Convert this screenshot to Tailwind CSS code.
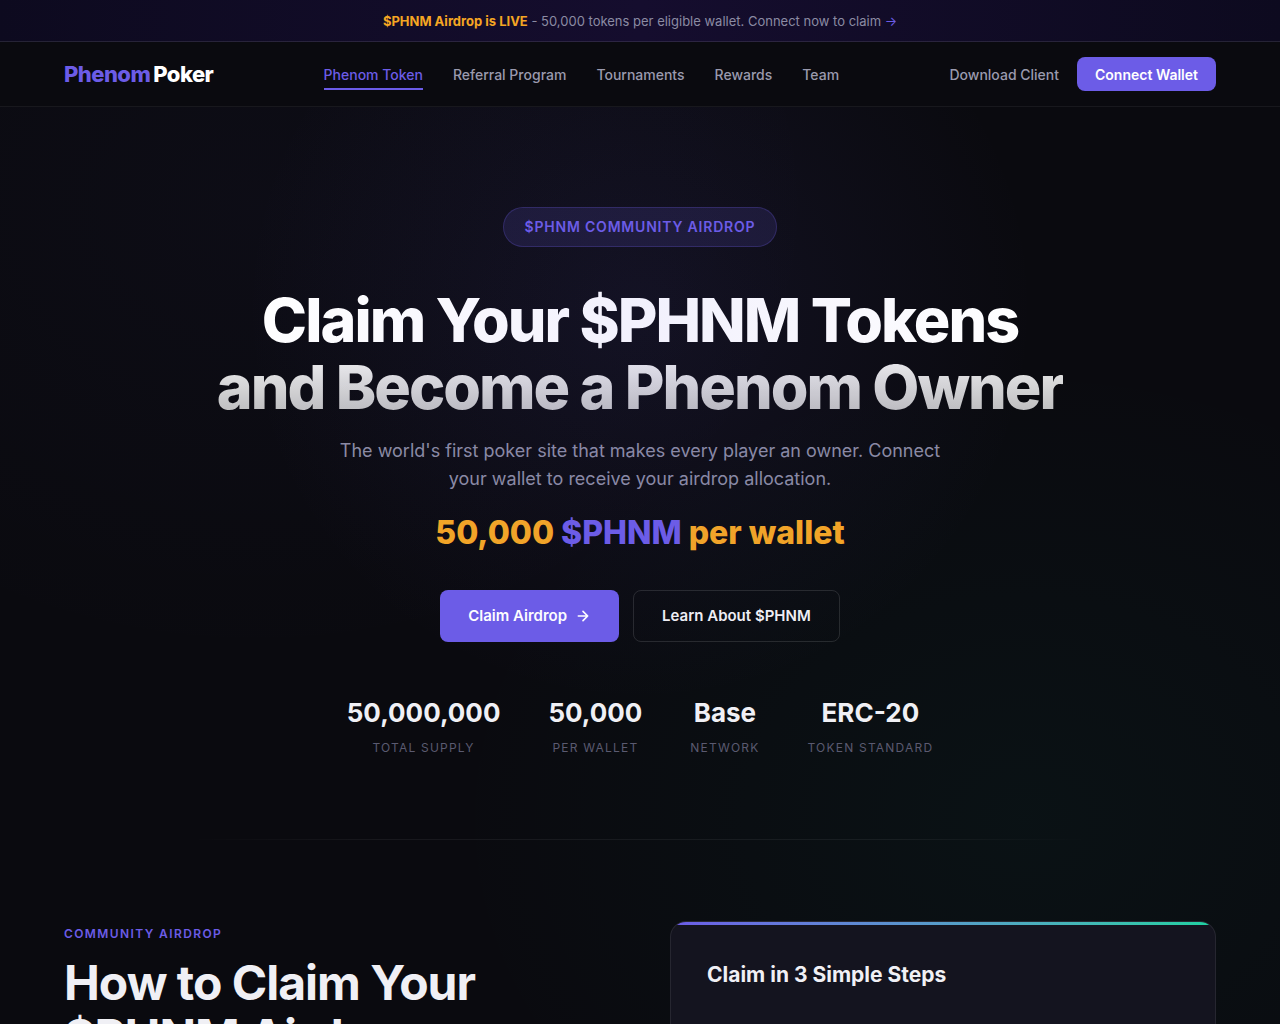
<!DOCTYPE html>
<html lang="en">
<head>
<meta charset="UTF-8">
<meta name="viewport" content="width=device-width, initial-scale=1.0">
<title>Phenom Poker - $PHNM Airdrop</title>
<script src="https://cdn.jsdelivr.net/npm/@tailwindcss/browser@4"></script>
</head>
<body class="min-h-screen bg-[#0a0a0f] bg-[radial-gradient(ellipse_at_20%_20%,rgba(108,92,231,0.03)_0%,transparent_40%),radial-gradient(ellipse_at_80%_80%,rgba(0,206,160,0.04)_0%,transparent_40%)] bg-fixed font-['Inter',sans-serif] text-[#f0f0f5]">

<!-- Announcement -->
<div class="border-b border-white/10 bg-linear-to-r from-[#0d0a1f] via-[#150d2e] to-[#0d0a1f] px-4 pt-3 pb-[10px] text-center text-[13px] leading-[19px] text-[#8b8ba3]">
    <strong class="font-bold text-[#f5a623]">$PHNM Airdrop is LIVE</strong> - 50,000 tokens per eligible wallet. Connect now to claim <a href="#claim" class="text-[#6c5ce7]">→</a>
</div>

<!-- Navbar -->
<nav class="border-b border-white/6 bg-[#0a0a0f]">
    <div class="mx-auto flex h-16 max-w-7xl items-center justify-between px-16">
        <a href="#" class="flex gap-[3px] text-[22px] font-extrabold tracking-tight"><span class="text-[#6c5ce7]">Phenom</span><span class="text-white">Poker</span></a>
        <div class="flex gap-[30px] text-[14px] font-medium leading-[22px] text-[#9a9aae]">
            <a href="#token" class="border-b-2 border-[#6c5ce7] pt-1.5 pb-0.5 text-[#6c5ce7]">Phenom Token</a>
            <a href="#referral" class="pt-1.5 pb-0.5">Referral Program</a>
            <a href="#tournaments" class="pt-1.5 pb-0.5">Tournaments</a>
            <a href="#rewards" class="pt-1.5 pb-0.5">Rewards</a>
            <a href="#team" class="pt-1.5 pb-0.5">Team</a>
        </div>
        <div class="flex items-center gap-[18px]">
            <a href="#download" class="text-[14px] font-medium text-[#9a9aae]">Download Client</a>
            <button type="button" class="h-[34px] rounded-lg bg-[#6c5ce7] px-[18px] text-[14px] font-semibold text-white">Connect Wallet</button>
        </div>
    </div>
</nav>

<!-- Hero -->
<header class="relative overflow-hidden pt-[100px] pb-20 text-center">
    <div class="flex flex-col items-center px-6">
        <span class="rounded-full border border-[#6c5ce7]/25 bg-[#6c5ce7]/15 px-[21px] py-2 text-[14px] font-semibold leading-[22px] tracking-[0.8px] text-[#6c5ce7]">$PHNM COMMUNITY AIRDROP</span>
        <h1 class="mt-10 bg-[linear-gradient(180deg,#fff_40%,rgba(255,255,255,0.7)_100%)] bg-clip-text text-[61px] font-extrabold leading-[67px] tracking-[-2px] text-transparent">Claim Your $PHNM Tokens<br>and Become a Phenom Owner</h1>
        <p class="mt-4 max-w-[620px] text-[18px] leading-7 text-[#8b8ba3]">The world's first poker site that makes every player an owner. Connect your wallet to receive your airdrop allocation.</p>
        <p class="mt-4 text-[32px] font-extrabold leading-[48px] text-[#f5a623]">50,000 <span class="text-[#6c5ce7]">$PHNM</span> per wallet</p>
        <div class="mt-[33px] flex gap-[14px]">
            <button type="button" class="flex h-[52px] items-center gap-2 rounded-lg bg-[#6c5ce7] px-7 text-[15px] font-semibold text-white">Claim Airdrop
                <svg class="size-4" viewBox="0 0 24 24" fill="none" stroke="currentColor" stroke-width="2.5" stroke-linecap="round" stroke-linejoin="round"><path d="M5 12h14M12 5l7 7-7 7"/></svg>
            </button>
            <a href="#about" class="flex h-[52px] items-center rounded-lg border border-white/12 px-7 text-[15px] font-semibold">Learn About $PHNM</a>
        </div>
        <dl class="mt-[50px] flex gap-12">
            <div class="flex flex-col-reverse"><dt class="pt-[3px] pb-px text-[12px] leading-[21px] tracking-[1.2px] text-[#5a5a70]">TOTAL SUPPLY</dt><dd class="text-[26px] font-bold leading-[42px]">50,000,000</dd></div>
            <div class="flex flex-col-reverse"><dt class="pt-[3px] pb-px text-[12px] leading-[21px] tracking-[1.2px] text-[#5a5a70]">PER WALLET</dt><dd class="text-[26px] font-bold leading-[42px]">50,000</dd></div>
            <div class="flex flex-col-reverse"><dt class="pt-[3px] pb-px text-[12px] leading-[21px] tracking-[1.2px] text-[#5a5a70]">NETWORK</dt><dd class="text-[26px] font-bold leading-[42px]">Base</dd></div>
            <div class="flex flex-col-reverse"><dt class="pt-[3px] pb-px text-[12px] leading-[21px] tracking-[1.2px] text-[#5a5a70]">TOKEN STANDARD</dt><dd class="text-[26px] font-bold leading-[42px]">ERC-20</dd></div>
        </dl>
    </div>
    <!-- glow sits above the text and tints it -->
    <div class="pointer-events-none absolute -top-[200px] left-1/2 size-[800px] -translate-x-1/2 bg-[radial-gradient(circle,rgba(108,92,231,0.09)_0%,transparent_70%)]"></div>
</header>

<div class="h-px bg-[linear-gradient(90deg,transparent_15%,rgba(255,255,255,0.06)_30%,rgba(255,255,255,0.06)_70%,transparent_85%)]"></div>

<!-- How to claim -->
<section id="claim" class="mx-auto grid max-w-7xl grid-cols-2 gap-[60px] px-16 pt-[81px]">
    <div>
        <p class="mt-[3px] text-[12px] font-semibold leading-5 tracking-[1.4px] text-[#6c5ce7]">COMMUNITY AIRDROP</p>
        <h2 class="mt-3 text-[48px] font-bold leading-[54px] tracking-[-1px]">How to Claim Your<br>$PHNM Airdrop</h2>
    </div>
    <div class="relative overflow-hidden rounded-2xl border border-white/8 bg-[#14141f] p-9">
        <div class="absolute inset-x-0 top-0 h-[3px] bg-linear-to-r from-[#6c5ce7] to-[#1dd1a1]"></div>
        <h3 class="text-[21px] font-bold leading-[34px]">Claim in 3 Simple Steps</h3>
    </div>
</section>

</body>
</html>
